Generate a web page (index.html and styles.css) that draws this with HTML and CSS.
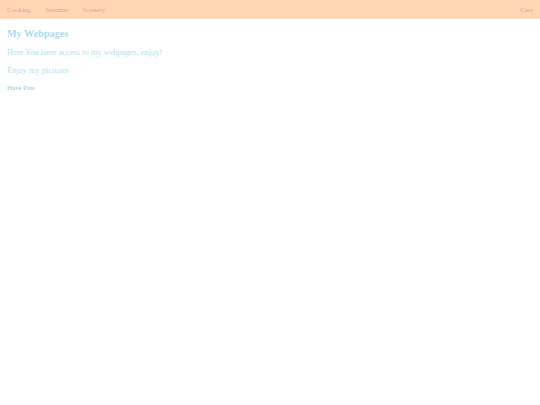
FILE: index.html
```html
<!DOCTYPE html>
<html>
<head>
<meta charset="utf-8">
<link rel="stylesheet" href="styles.css">
</head>
<body>
<nav class="topnav">
  <div class="nav-left">
    <a class="nav-link" href="#">Cooking</a>
    <a class="nav-link" href="#">Summer</a>
    <a class="nav-link" href="#">Scenery</a>
  </div>
  <a class="nav-link" href="#">Cars</a>
</nav>
<main class="content">
  <h1 class="title">My Webpages</h1>
  <p class="text">Here You have access to my webpages, enjoy!</p>
  <p class="text">Enjoy my pictures</p>
  <h4 class="sub">Have Fun</h4>
</main>
</body>
</html>
```
FILE: styles.css
```css
html, body {
  margin: 0;
  padding: 0;
  background: #ffffff;
  font-family: "Liberation Serif", "Times New Roman", serif;
}
.topnav {
  display: flex;
  justify-content: space-between;
  align-items: center;
  height: 19px;
  background: #ffd7b5;
  padding: 0 7px;
}
.nav-left {
  display: flex;
  gap: 14px;
}
.nav-link {
  color: #fa8fad;
  text-decoration: none;
  font-size: 7px;
}
.content {
  padding: 0 7px;
  color: #add8e6;
}
.title {
  font-size: 10.2px;
  margin: 8px 0 0;
  line-height: 14px;
}
.text {
  font-size: 8.4px;
  margin: 6px 0 0;
  line-height: 12px;
  color: #b8e0ea;
}
.text + .text {
  margin-top: 6px;
}
.sub {
  font-size: 6.5px;
  margin: 6px 0 0;
  line-height: 10px;
}
```
